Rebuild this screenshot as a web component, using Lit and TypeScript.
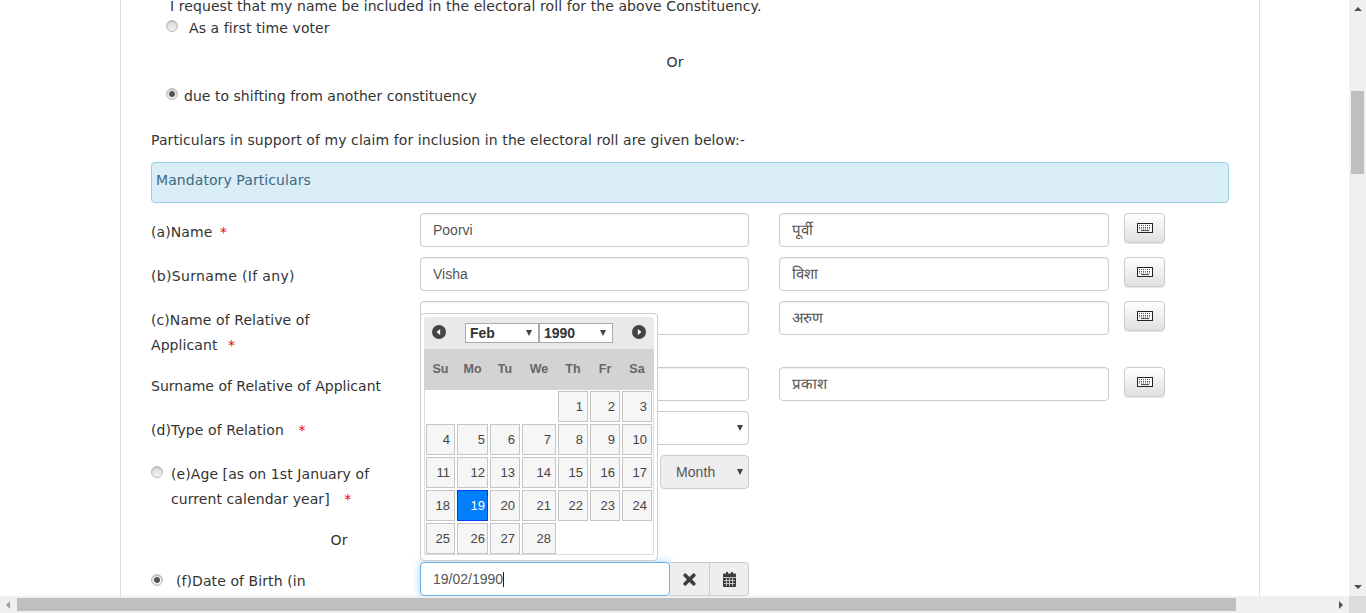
import { LitElement, html, css, svg } from "lit";
import { customElement } from "lit/decorators.js";

const keyboardIcon = svg`<svg width="16" height="10" viewBox="0 0 16 10"><rect x="0.5" y="0.5" width="15" height="9" fill="#fff" stroke="#222"/><path d="M2 2.500h12M2 4.500h12M2 6h12" stroke="#555" stroke-dasharray="1 1"/><path d="M4 7.600h8" stroke="#444"/></svg>`;

const timesIcon = svg`<svg width="13" height="13" viewBox="0 0 13 13"><path d="M2.200 2.200l8.600 8.600M10.800 2.200l-8.600 8.600" stroke="#3d3d3d" stroke-width="3.600" stroke-linecap="round"/></svg>`;

const calendarIcon = svg`<svg width="13" height="15" viewBox="0 0 13 15"><path fill="#3d3d3d" d="M1 1.500h2V0h2v1.500h3V0h2v1.500h2a1 1 0 0 1 1 1V14a1 1 0 0 1-1 1H1a1 1 0 0 1-1-1V2.500a1 1 0 0 1 1-1z"/><path stroke="#eee" stroke-opacity="0.7" d="M0 5.500h13M1 8.500h11M1 11.500h11M3.500 6v8M6.500 6v8M9.500 6v8"/></svg>`;

const circleArrow = (dir: "left" | "right") => svg`<svg width="14" height="14" viewBox="0 0 14 14"><circle cx="7" cy="7" r="7" fill="#444"/><path fill="#fff" d="${dir === "left" ? "M8.200 4v6L4.500 7z" : "M5.800 4v6L9.500 7z"}"/></svg>`;

const weeks = [
    ["", "", "", "", 1, 2, 3],
    [4, 5, 6, 7, 8, 9, 10],
    [11, 12, 13, 14, 15, 16, 17],
    [18, 19, 20, 21, 22, 23, 24],
    [25, 26, 27, 28, "", "", ""],
];

@customElement("app-root")
export class AppRoot extends LitElement {
    static styles = css`
        :host {
            display: grid;
            grid-template-columns: 1349px 17px;
            grid-template-rows: 596px 17px;
            width: 1366px;
            height: 613px;
            overflow: hidden;
            background: #fff;
            font-family: "DejaVu Sans", sans-serif;
            font-size: 14px;
            letter-spacing: 0.08px;
            color: #333;
        }

        .view {
            overflow: hidden;
            padding: 0 0 0 120px;
        }

        .sheet {
            position: relative;
            box-sizing: border-box;
            width: 1140px;
            height: 700px;
            margin-top: -4px;
            padding: 0 30px;
            border-left: 1px solid #ddd;
            border-right: 1px solid #ddd;
        }

        .line {
            line-height: 20px;
            white-space: nowrap;
        }

        .request {
            padding-left: 19px;
        }

        .radio-line {
            display: flex;
            align-items: center;
            height: 24px;
            padding-left: 15px;
        }

        .radio-line.second {
            margin-top: 12px;
            gap: 6px;
            letter-spacing: 0.03px;
        }

        .radio-line.first {
            gap: 11px;
        }

        .radio {
            flex: none;
            box-sizing: border-box;
            width: 12px;
            height: 12px;
            margin-top: -4px;
            border-radius: 50%;
            border: 1px solid #b9b9b9;
            background: linear-gradient(#d8d8d8, #f4f4f4);
            box-shadow: inset 0 1px 1px #bbb;
        }

        .radio.on {
            background: radial-gradient(circle, #555 0 2.500px, #eee 3.500px);
        }

        .or-wide {
            margin-top: 12px;
            text-align: center;
            line-height: 20px;
            width: 1048px;
        }

        .particulars {
            margin-top: 22px;
            line-height: 20px;
        }

        .alert {
            box-sizing: border-box;
            height: 41px;
            margin: 12px 0 10px;
            padding: 7px 4px;
            background: #d9edf7;
            border: 1px solid #9acfea;
            border-radius: 4px;
            color: #3b6a85;
            line-height: 20px;
        }

        .label {
            padding-top: 7px;
            line-height: 25px;
            white-space: nowrap;
        }

        .wide {
            letter-spacing: 0.34px;
        }

        .tight {
            letter-spacing: 0;
        }

        .req {
            color: #e00;
            margin-left: 5px;
        }

        .req.sm {
            margin-left: 3px;
        }

        .req.md {
            margin-left: 6px;
        }

        .req.lg {
            margin-left: 10px;
        }

        input {
            box-sizing: border-box;
            height: 34px;
            padding: 6px 12px;
            border: 1px solid #ccc;
            border-radius: 4px;
            font-family: "Liberation Sans", sans-serif;
            font-size: 14px;
            color: #555;
            box-shadow: inset 0 1px 1px rgba(0, 0, 0, 0.075);
            outline: none;
        }

        input.hi {
            font-size: 15px;
            padding-bottom: 9px;
        }

        .cols {
            display: grid;
            grid-template-columns: 269px 329px 30px 330px 15px 41px;
            min-height: 34px;
            margin-bottom: 10px;
        }

        .cols.tall {
            height: 56px;
        }

        .cols.flush {
            margin-bottom: 0;
        }

        .kbd {
            grid-column: 6;
            display: flex;
            align-items: center;
            justify-content: center;
            height: 28px;
            border: 1px solid #ccc;
            border-radius: 4px;
            background: linear-gradient(#fff, #e0e0e0);
            box-shadow: 0 1px 1px rgba(0, 0, 0, 0.1);
        }

        .sel {
            display: flex;
            align-items: center;
            justify-content: flex-end;
            box-sizing: border-box;
            height: 34px;
            padding-right: 5px;
            border: 1px solid #ccc;
            border-radius: 4px;
            font-family: "Liberation Sans", sans-serif;
            color: #555;
            background: #fff;
        }

        .tri {
            width: 0;
            height: 0;
            border-left: 3px solid transparent;
            border-right: 3px solid transparent;
            border-top: 6px solid #444;
        }

        .age-box {
            display: flex;
            justify-content: flex-end;
        }

        .month {
            width: 89px;
            justify-content: space-between;
            padding-left: 15px;
            background: #eee;
        }

        .radio-label {
            display: flex;
            gap: 8px;
        }

        .radio-label .radio {
            margin-top: 4px;
        }

        .radio-label.dob {
            gap: 13px;
        }

        .radio-label.dob .radio {
            margin-top: 5px;
        }

        .or-small {
            width: 376px;
            text-align: center;
            line-height: 20px;
            margin: 18px 0 12px;
        }

        .date-group {
            position: relative;
            display: flex;
            height: 34px;
        }

        .date-group::after {
            content: "";
            position: absolute;
            left: 83px;
            top: 10px;
            width: 1px;
            height: 15px;
            background: #222;
        }

        .date-group input {
            width: 250px;
            border-color: #66afe9;
            box-shadow: 0 0 8px rgba(102, 175, 233, 0.6);
        }

        .addon {
            display: flex;
            align-items: center;
            justify-content: center;
            box-sizing: border-box;
            width: 40px;
            background: #eee;
            border: 1px solid #ccc;
            border-left: 0;
        }

        .addon:last-of-type {
            width: 39px;
            border-radius: 0 4px 4px 0;
        }

        .picker {
            position: absolute;
            left: 299px;
            top: 317px;
            box-sizing: border-box;
            width: 238px;
            height: 248px;
            padding: 3px;
            background: #fff;
            border: 1px solid #ccc;
            border-radius: 4px;
            font-family: "Liberation Sans", sans-serif;
            letter-spacing: 0;
            color: #454545;
        }

        .dp-head {
            display: flex;
            align-items: center;
            justify-content: space-between;
            box-sizing: border-box;
            height: 32px;
            padding: 0 8px;
            background: #e9e9e9;
            border-radius: 3px 3px 0 0;
        }

        .dp-head svg {
            margin-top: -2px;
        }

        .dp-selects {
            display: flex;
        }

        .dp-sel {
            display: flex;
            align-items: center;
            justify-content: space-between;
            box-sizing: border-box;
            width: 74px;
            height: 20px;
            padding: 0 6px 0 4px;
            border: 1px solid #aaa;
            background: #fff;
            font-weight: bold;
            color: #333;
        }

        .dp-body {
            box-sizing: border-box;
            width: 230px;
            height: 206px;
            border: 1px solid #ddd;
            border-top: 0;
        }

        .dp-grid {
            display: grid;
            grid-template-columns: 29px 31px 30px 34px 30px 30px 30px;
            column-gap: 2px;
            padding-left: 1px;
        }

        .dow {
            height: 41px;
            margin: 0 -1px;
            padding-left: 2px;
            background: #d3d3d3;
        }

        .dow span {
            line-height: 41px;
            text-align: center;
            font-weight: bold;
            font-size: 12.500px;
            color: #666;
        }

        .days {
            row-gap: 2px;
            padding-top: 1px;
        }

        .day {
            box-sizing: border-box;
            height: 31px;
            padding: 0 4px;
            border: 1px solid #c5c5c5;
            background: #f6f6f6;
            text-align: right;
            font-size: 13px;
            line-height: 29px;
        }

        .day:nth-child(7n + 2) {
            padding-right: 2px;
        }

        .day.sel-day {
            background: #007fff;
            border-color: #003eff;
            color: #fff;
        }

        .vbar {
            display: flex;
            flex-direction: column;
            align-items: center;
            background: #f0f0f0;
        }

        .hbar {
            display: flex;
            align-items: center;
            background: #f0f0f0;
        }

        .corner {
            background: #dcdcdc;
        }

        .a-up,
        .a-down {
            width: 0;
            height: 0;
            border-left: 4px solid transparent;
            border-right: 4px solid transparent;
        }

        .a-up {
            margin-top: 7px;
            border-bottom: 4px solid #505050;
        }

        .a-down {
            margin-top: auto;
            margin-bottom: 7px;
            border-top: 4px solid #505050;
        }

        .a-left,
        .a-right {
            width: 0;
            height: 0;
            border-top: 4px solid transparent;
            border-bottom: 4px solid transparent;
        }

        .a-left {
            margin-left: 6px;
            border-right: 4px solid #a3a3a3;
        }

        .a-right {
            margin-left: auto;
            margin-right: 6px;
            border-left: 4px solid #505050;
        }

        .v-thumb {
            width: 13px;
            height: 83px;
            margin-top: 80px;
            background: #bfbfbf;
        }

        .h-thumb {
            width: 1219px;
            height: 13px;
            margin-left: 7px;
            background: #bfbfbf;
        }
    `;

    render() {
        return html`
            <div class="view">
                <div class="sheet">
                    <div class="line request">I request that my name be included in the electoral roll for the above Constituency.</div>
                    <div class="radio-line first"><span class="radio"></span><span>As a first time voter</span></div>
                    <div class="or-wide">Or</div>
                    <div class="radio-line second"><span class="radio on"></span><span>due to shifting from another constituency</span></div>
                    <div class="particulars">Particulars in support of my claim for inclusion in the electoral roll are given below:-</div>
                    <div class="alert">Mandatory Particulars</div>

                    ${this.nameRow(html`(a)Name <span class="req sm">*</span>`, "Poorvi", "पूर्वी")}
                    ${this.nameRow(html`<span class="wide">(b)Surname (If any)</span>`, "Visha", "विशा")}
                    ${this.nameRow(html`(c)Name of Relative of<br />Applicant <span class="req md">*</span>`, "", "अरुण", "tall")}
                    ${this.nameRow(html`<span class="tight">Surname of Relative of Applicant</span>`, "", "प्रकाश")}

                    <div class="cols">
                        <div class="label">(d)Type of Relation <span class="req lg">*</span></div>
                        <div class="sel"><span class="tri"></span></div>
                    </div>

                    <div class="cols flush">
                        <div class="label radio-label">
                            <span class="radio"></span>
                            <span>(e)Age [as on 1st January of<br />current calendar year] <span class="req lg">*</span></span>
                        </div>
                        <div class="age-box">
                            <div class="sel month">Month<span class="tri"></span></div>
                        </div>
                    </div>
                    <div class="or-small">Or</div>

                    <div class="cols flush">
                        <div class="label radio-label dob">
                            <span class="radio on"></span>
                            <span>(f)Date of Birth (in</span>
                        </div>
                        <div class="date-group">
                            <input value="19/02/1990" />
                            <span class="addon">${timesIcon}</span>
                            <span class="addon">${calendarIcon}</span>
                        </div>
                    </div>

                    ${this.renderPicker()}
                </div>
            </div>
            <div class="vbar">
                <span class="a-up"></span>
                <span class="v-thumb"></span>
                <span class="a-down"></span>
            </div>
            <div class="hbar">
                <span class="a-left"></span>
                <span class="h-thumb"></span>
                <span class="a-right"></span>
            </div>
            <div class="corner"></div>
        `;
    }

    nameRow(label: unknown, en: string, hi: string, variant = "") {
        return html`
            <div class="cols ${variant}">
                <div class="label">${label}</div>
                <input value=${en} />
                <span></span>
                <input class="hi" value=${hi} />
                <span></span>
                <div class="kbd">${keyboardIcon}</div>
            </div>
        `;
    }

    renderPicker() {
        return html`
            <div class="picker">
                <div class="dp-head">
                    ${circleArrow("left")}
                    <div class="dp-selects">
                        <div class="dp-sel">Feb<span class="tri"></span></div>
                        <div class="dp-sel">1990<span class="tri"></span></div>
                    </div>
                    ${circleArrow("right")}
                </div>
                <div class="dp-body">
                    <div class="dp-grid dow">
                        ${["Su", "Mo", "Tu", "We", "Th", "Fr", "Sa"].map((d) => html`<span>${d}</span>`)}
                    </div>
                    <div class="dp-grid days">
                        ${weeks.flat().map((d) =>
                            d === ""
                                ? html`<span></span>`
                                : html`<span class="day ${d === 19 ? "sel-day" : ""}">${d}</span>`
                        )}
                    </div>
                </div>
            </div>
        `;
    }
}
